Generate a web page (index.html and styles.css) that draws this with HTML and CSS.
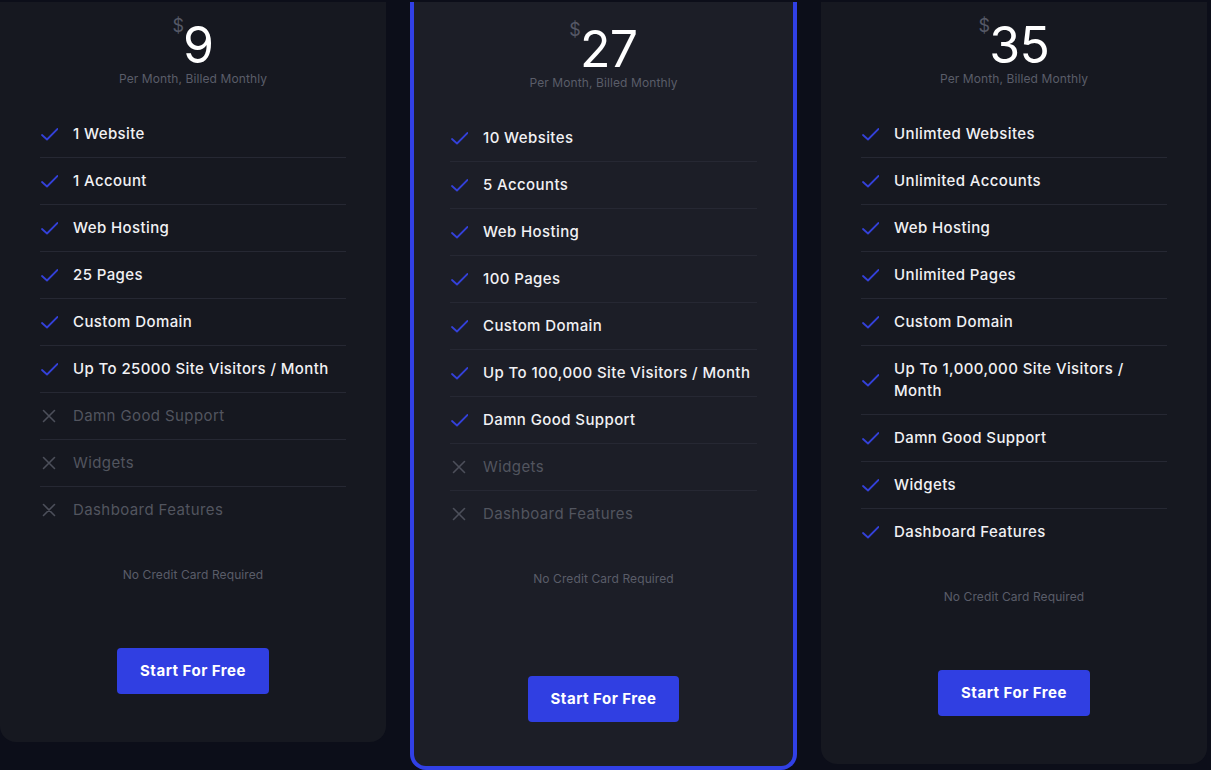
FILE: index.html
```html
<!DOCTYPE html>
<html lang="en">
<head>
<meta charset="utf-8">
<title>Pricing</title>
<link rel="stylesheet" href="styles.css">
</head>
<body>
<main class="pricing">
  <section class="plan">
    <div class="price"><span class="currency">$</span><span class="amount">9</span></div>
    <p class="billing">Per Month, Billed Monthly</p>
    <ul class="features">
      <li class="feature"><svg class="icon icon--check" viewBox="0 0 18 14"><path d="M2 8 L7 12.5 L17.5 2"/></svg><span>1 Website</span></li>
      <li class="feature"><svg class="icon icon--check" viewBox="0 0 18 14"><path d="M2 8 L7 12.5 L17.5 2"/></svg><span>1 Account</span></li>
      <li class="feature"><svg class="icon icon--check" viewBox="0 0 18 14"><path d="M2 8 L7 12.5 L17.5 2"/></svg><span>Web Hosting</span></li>
      <li class="feature"><svg class="icon icon--check" viewBox="0 0 18 14"><path d="M2 8 L7 12.5 L17.5 2"/></svg><span>25 Pages</span></li>
      <li class="feature"><svg class="icon icon--check" viewBox="0 0 18 14"><path d="M2 8 L7 12.5 L17.5 2"/></svg><span>Custom Domain</span></li>
      <li class="feature"><svg class="icon icon--check" viewBox="0 0 18 14"><path d="M2 8 L7 12.5 L17.5 2"/></svg><span>Up To 25000 Site Visitors / Month</span></li>
      <li class="feature feature--off"><svg class="icon icon--cross" viewBox="0 0 18 14"><path d="M3.5 1.5 L14.5 12.5 M14.5 1.5 L3.5 12.5"/></svg><span>Damn Good Support</span></li>
      <li class="feature feature--off"><svg class="icon icon--cross" viewBox="0 0 18 14"><path d="M3.5 1.5 L14.5 12.5 M14.5 1.5 L3.5 12.5"/></svg><span>Widgets</span></li>
      <li class="feature feature--off"><svg class="icon icon--cross" viewBox="0 0 18 14"><path d="M3.5 1.5 L14.5 12.5 M14.5 1.5 L3.5 12.5"/></svg><span>Dashboard Features</span></li>
    </ul>
    <p class="note">No Credit Card Required</p>
    <a class="cta" href="#">Start For Free</a>
  </section>

  <section class="plan plan--featured">
    <div class="price"><span class="currency">$</span><span class="amount">27</span></div>
    <p class="billing">Per Month, Billed Monthly</p>
    <ul class="features">
      <li class="feature"><svg class="icon icon--check" viewBox="0 0 18 14"><path d="M2 8 L7 12.5 L17.5 2"/></svg><span>10 Websites</span></li>
      <li class="feature"><svg class="icon icon--check" viewBox="0 0 18 14"><path d="M2 8 L7 12.5 L17.5 2"/></svg><span>5 Accounts</span></li>
      <li class="feature"><svg class="icon icon--check" viewBox="0 0 18 14"><path d="M2 8 L7 12.5 L17.5 2"/></svg><span>Web Hosting</span></li>
      <li class="feature"><svg class="icon icon--check" viewBox="0 0 18 14"><path d="M2 8 L7 12.5 L17.5 2"/></svg><span>100 Pages</span></li>
      <li class="feature"><svg class="icon icon--check" viewBox="0 0 18 14"><path d="M2 8 L7 12.5 L17.5 2"/></svg><span>Custom Domain</span></li>
      <li class="feature"><svg class="icon icon--check" viewBox="0 0 18 14"><path d="M2 8 L7 12.5 L17.5 2"/></svg><span>Up To 100,000 Site Visitors / Month</span></li>
      <li class="feature"><svg class="icon icon--check" viewBox="0 0 18 14"><path d="M2 8 L7 12.5 L17.5 2"/></svg><span>Damn Good Support</span></li>
      <li class="feature feature--off"><svg class="icon icon--cross" viewBox="0 0 18 14"><path d="M3.5 1.5 L14.5 12.5 M14.5 1.5 L3.5 12.5"/></svg><span>Widgets</span></li>
      <li class="feature feature--off"><svg class="icon icon--cross" viewBox="0 0 18 14"><path d="M3.5 1.5 L14.5 12.5 M14.5 1.5 L3.5 12.5"/></svg><span>Dashboard Features</span></li>
    </ul>
    <p class="note">No Credit Card Required</p>
    <a class="cta" href="#">Start For Free</a>
  </section>

  <section class="plan">
    <div class="price"><span class="currency">$</span><span class="amount">35</span></div>
    <p class="billing">Per Month, Billed Monthly</p>
    <ul class="features">
      <li class="feature"><svg class="icon icon--check" viewBox="0 0 18 14"><path d="M2 8 L7 12.5 L17.5 2"/></svg><span>Unlimted Websites</span></li>
      <li class="feature"><svg class="icon icon--check" viewBox="0 0 18 14"><path d="M2 8 L7 12.5 L17.5 2"/></svg><span>Unlimited Accounts</span></li>
      <li class="feature"><svg class="icon icon--check" viewBox="0 0 18 14"><path d="M2 8 L7 12.5 L17.5 2"/></svg><span>Web Hosting</span></li>
      <li class="feature"><svg class="icon icon--check" viewBox="0 0 18 14"><path d="M2 8 L7 12.5 L17.5 2"/></svg><span>Unlimited Pages</span></li>
      <li class="feature"><svg class="icon icon--check" viewBox="0 0 18 14"><path d="M2 8 L7 12.5 L17.5 2"/></svg><span>Custom Domain</span></li>
      <li class="feature"><svg class="icon icon--check" viewBox="0 0 18 14"><path d="M2 8 L7 12.5 L17.5 2"/></svg><span>Up To 1,000,000 Site Visitors / Month</span></li>
      <li class="feature"><svg class="icon icon--check" viewBox="0 0 18 14"><path d="M2 8 L7 12.5 L17.5 2"/></svg><span>Damn Good Support</span></li>
      <li class="feature"><svg class="icon icon--check" viewBox="0 0 18 14"><path d="M2 8 L7 12.5 L17.5 2"/></svg><span>Widgets</span></li>
      <li class="feature"><svg class="icon icon--check" viewBox="0 0 18 14"><path d="M2 8 L7 12.5 L17.5 2"/></svg><span>Dashboard Features</span></li>
    </ul>
    <p class="note">No Credit Card Required</p>
    <a class="cta" href="#">Start For Free</a>
  </section>
</main>
</body>
</html>
```

FILE: styles.css
```css
* {
  box-sizing: border-box;
  margin: 0;
  padding: 0;
}

html, body {
  height: 770px;
  overflow: hidden;
}

body {
  background: #0c0e19;
  font-family: Inter, "Noto Sans", sans-serif;
  color: #f1f1f4;
}

.pricing {
  display: flex;
  align-items: flex-start;
  gap: 24px;
  padding-top: 2px;
}

.plan {
  width: 386px;
  flex: none;
  display: flex;
  flex-direction: column;
  background: #161820;
  border-radius: 0 0 16px 16px;
  padding: 18px 40px 48px;
}

.plan--featured {
  width: 387px;
  background: #1c1e27;
  border: 4px solid #3140e6;
  border-top: 0;
  padding: 22px 36px 44px;
}

.price {
  display: flex;
  justify-content: center;
  align-items: flex-start;
}

.currency {
  font-size: 18px;
  line-height: 18px;
  color: #555866;
  margin-top: -3px;
  margin-right: -1px;
}

.amount {
  font-size: 50px;
  line-height: 50px;
  font-weight: 400;
  letter-spacing: -0.5px;
  color: #ffffff;
}

.billing {
  font-size: 12px;
  line-height: 18px;
  letter-spacing: 0.1px;
  color: #5a5d69;
  text-align: center;
}

.features {
  list-style: none;
  margin-top: 23px;
}

.feature {
  display: flex;
  align-items: center;
  gap: 15px;
  padding: 12px 0;
  border-bottom: 1px solid #262833;
  font-size: 15px;
  line-height: 22px;
  font-weight: 500;
  letter-spacing: 0.4px;
  color: #f1f1f4;
}

.feature:last-child {
  border-bottom: 0;
}

.feature--off {
  color: #52555f;
  font-weight: 400;
}

.icon {
  width: 18px;
  height: 14px;
  flex: none;
  fill: none;
  stroke-linecap: round;
  stroke-linejoin: round;
}

.icon--check {
  stroke: #3441d9;
  stroke-width: 1.8;
}

.icon--cross {
  stroke: #4c4f5a;
  stroke-width: 1.6;
}

.note {
  margin-top: 33px;
  font-size: 12px;
  line-height: 18px;
  letter-spacing: 0.1px;
  text-align: center;
  color: #5a5d69;
}

.cta {
  align-self: center;
  margin-top: 64px;
  padding: 12px 23px;
  border-radius: 4px;
  background: #303fe2;
  color: #ffffff;
  font-size: 15px;
  line-height: 22px;
  font-weight: 700;
  letter-spacing: 0.5px;
  text-decoration: none;
}

.plan--featured .cta {
  margin-top: 88px;
}
```
